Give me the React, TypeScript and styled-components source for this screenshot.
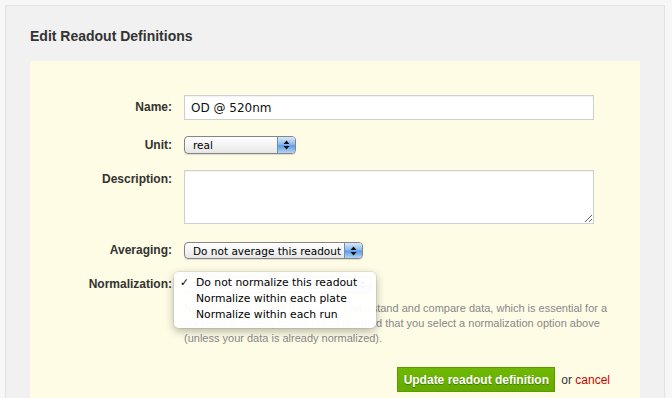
import React from 'react';
import styled, { createGlobalStyle } from 'styled-components';

const GlobalStyle = createGlobalStyle`
  html, body {
    margin: 0;
    padding: 0;
    height: 100%;
    overflow: hidden;
    background: #f7f7f7;
    font-family: 'Liberation Sans', Arial, sans-serif;
  }
`;

const Panel = styled.div`
  margin: 5px 0 0 5px;
  width: 660px;
  height: 393px;
  box-sizing: border-box;
  background: #f1f1f1;
  border: 1px solid #e2e2e2;
  border-bottom: none;
  padding: 22px 24px 0 24px;
  overflow: hidden;
`;

const Title = styled.h2`
  margin: 0 0 16px 0;
  font-size: 14px;
  line-height: 17px;
  font-weight: bold;
  color: #333;
`;

const FormBox = styled.div`
  position: relative;
  background: #fefce5;
  height: 340px;
  padding: 34px 46px 0 0;
  box-sizing: border-box;
`;

const Row = styled.div<{ $gap?: number; $top?: boolean }>`
  display: flex;
  align-items: ${({ $top }) => ($top ? 'flex-start' : 'center')};
  gap: 12px;
  margin-top: ${({ $gap }) => $gap ?? 0}px;
`;

const Label = styled.label<{ $top?: boolean }>`
  width: 142px;
  flex: none;
  text-align: right;
  font-size: 12px;
  line-height: 15px;
  font-weight: bold;
  color: #333;
  padding-top: ${({ $top }) => ($top ? '2px' : '0')};
`;

const TextInput = styled.input`
  width: 410px;
  height: 25px;
  box-sizing: border-box;
  border: 1px solid #cfcfcf;
  box-shadow: inset 0 1px 2px rgba(0, 0, 0, 0.06);
  padding: 0 6px;
  font-family: 'DejaVu Sans', sans-serif;
  font-size: 12px;
  color: #111;
  background: #fff;
  outline: none;
`;

const TextArea = styled.textarea`
  width: 410px;
  height: 54px;
  box-sizing: border-box;
  border: 1px solid #cfcfcf;
  box-shadow: inset 0 1px 2px rgba(0, 0, 0, 0.06);
  background: #fff;
  outline: none;
  margin: 0;
  display: block;
`;

const SelectBox = styled.div<{ $width: number; $height: number }>`
  position: relative;
  width: ${({ $width }) => $width}px;
  height: ${({ $height }) => $height}px;
  box-sizing: border-box;
  border: 1px solid #858585;
  border-radius: 4px;
  background: linear-gradient(#ffffff, #f4f4f4 50%, #e6e6e6);
  box-shadow: 0 1px 1px rgba(0, 0, 0, 0.12);
  display: flex;
  align-items: center;
  padding-left: 8px;
  font-family: 'DejaVu Sans', sans-serif;
  font-size: 10.5px;
  color: #000;
  white-space: nowrap;
  overflow: hidden;
`;

const ArrowCap = styled.span`
  position: absolute;
  top: 0;
  right: 0;
  bottom: 0;
  width: 17px;
  border-left: 1px solid #6f8fb8;
  background: linear-gradient(#d8e8fa, #8fbcef 45%, #5e9ce4 55%, #b4d4f6);
  display: flex;
  align-items: center;
  justify-content: center;
`;

const Help = styled.p`
  margin: 8px 0 0 154px;
  font-size: 11px;
  line-height: 15px;
  color: #888;
  white-space: nowrap;
`;

const Actions = styled.div`
  display: flex;
  justify-content: flex-end;
  align-items: center;
  gap: 6px;
  margin-top: 21px;
  margin-right: -16px;
  font-size: 12px;
  color: #333;
`;

const SubmitButton = styled.button`
  width: 158px;
  height: 25px;
  box-sizing: border-box;
  border: 1px solid #5b9a00;
  background: linear-gradient(#6fb802, #64ab00);
  color: #fff;
  font-family: 'Liberation Sans', Arial, sans-serif;
  font-size: 12px;
  font-weight: bold;
  text-shadow: 0 1px 1px rgba(0, 0, 0, 0.35);
  padding: 0;
`;

const CancelLink = styled.a`
  color: #cc0000;
  text-decoration: none;
`;

const Menu = styled.ul`
  position: absolute;
  left: 144px;
  top: 211px;
  width: 202px;
  margin: 0;
  padding: 3px 0 5px 0;
  list-style: none;
  box-sizing: border-box;
  background: rgba(255, 255, 255, 0.96);
  border-radius: 5px;
  box-shadow: 0 3px 10px rgba(0, 0, 0, 0.3), 0 0 0 1px rgba(0, 0, 0, 0.06);
  font-family: 'DejaVu Sans', sans-serif;
  font-size: 10.8px;
  color: #000;
`;

const MenuItem = styled.li<{ $checked?: boolean }>`
  position: relative;
  height: 16px;
  line-height: 16px;
  padding-left: 22px;
  white-space: nowrap;

  &::before {
    content: ${({ $checked }) => ($checked ? "'✓'" : "''")};
    position: absolute;
    left: 6px;
  }
`;

const Arrows = () => (
  <svg width="7" height="10" viewBox="0 0 7 10">
    <path d="M3.5 0.5 L6.5 4 L0.5 4 Z" fill="#111" />
    <path d="M3.5 9.5 L6.5 6 L0.5 6 Z" fill="#111" />
  </svg>
);

const Select = ({ value, width, height }: { value: string; width: number; height: number }) => (
  <SelectBox $width={width} $height={height}>
    {value}
    <ArrowCap>
      <Arrows />
    </ArrowCap>
  </SelectBox>
);

const App = () => {
  return (
    <>
      <GlobalStyle />
      <Panel>
        <Title>Edit Readout Definitions</Title>
        <FormBox>
          <Row>
            <Label>Name:</Label>
            <TextInput defaultValue="OD @ 520nm" />
          </Row>
          <Row $gap={16}>
            <Label>Unit:</Label>
            <Select value="real" width={112} height={18} />
          </Row>
          <Row $gap={16} $top>
            <Label $top>Description:</Label>
            <TextArea />
          </Row>
          <Row $gap={18}>
            <Label>Averaging:</Label>
            <Select value="Do not average this readout" width={179} height={17} />
          </Row>
          <Row $gap={17}>
            <Label>Normalization:</Label>
            <Select value="Do not normalize this readout" width={188} height={17} />
          </Row>
          <Help>
            Normalization makes it easier to understand and compare data, which is essential for a
            <br />
            successful screen, so it is recommended that you select a normalization option above
            <br />
            (unless your data is already normalized).
          </Help>
          <Actions>
            <SubmitButton>Update readout definition</SubmitButton>
            <span>
              or <CancelLink href="#">cancel</CancelLink>
            </span>
          </Actions>
          <Menu>
            <MenuItem $checked>Do not normalize this readout</MenuItem>
            <MenuItem>Normalize within each plate</MenuItem>
            <MenuItem>Normalize within each run</MenuItem>
          </Menu>
        </FormBox>
      </Panel>
    </>
  );
};

export default App;
